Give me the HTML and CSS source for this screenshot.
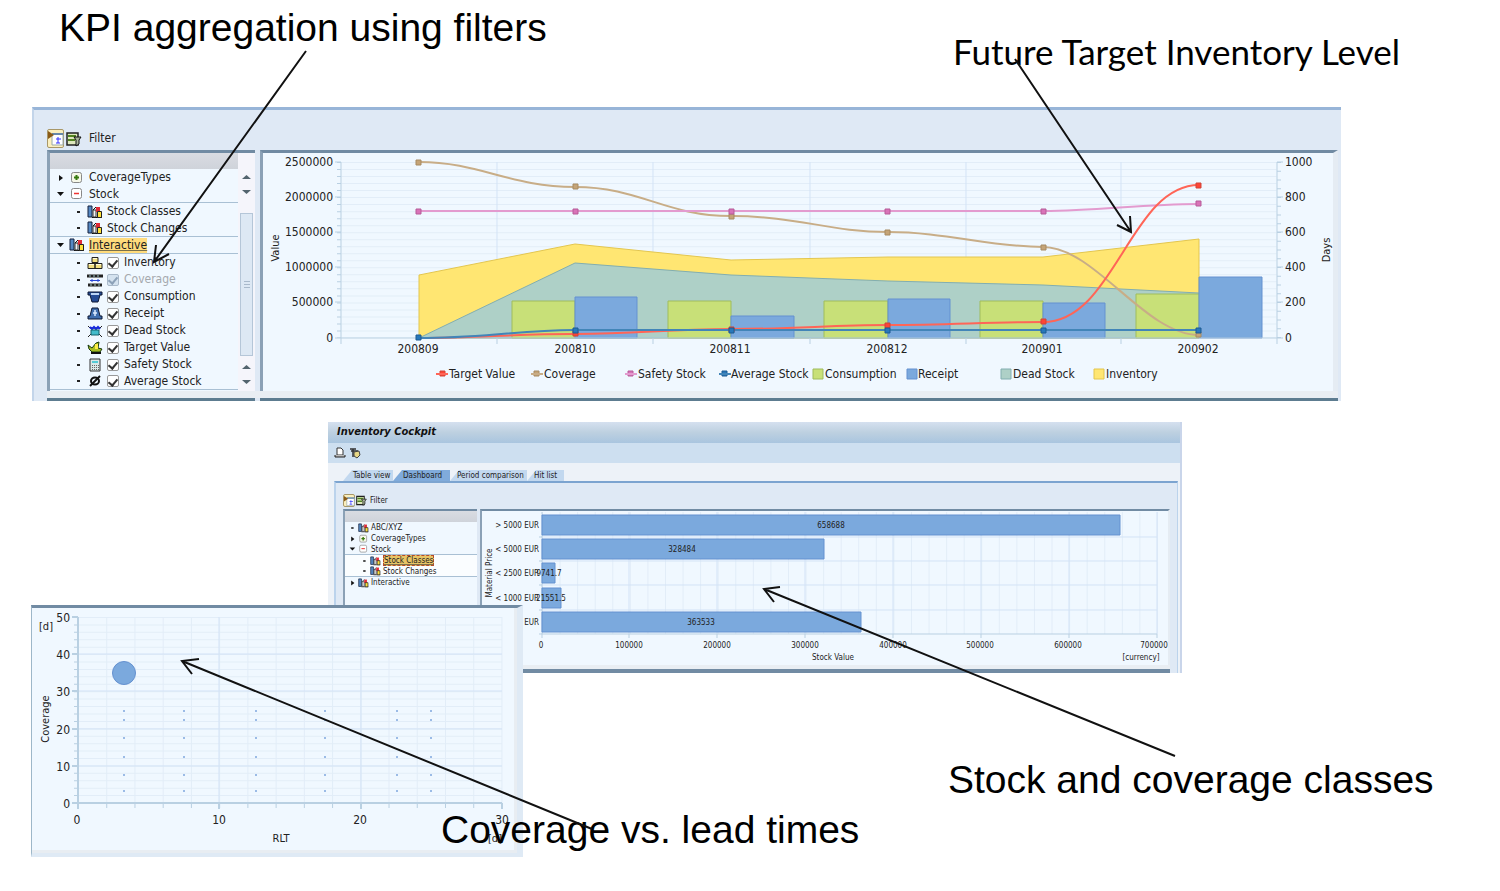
FILE: index.html
```html
<!DOCTYPE html>
<html lang="en">
<head>
<meta charset="utf-8">
<title>Inventory Cockpit</title>
<link rel="stylesheet" href="styles.css">
</head>
<body>
<svg class="defs" aria-hidden="true">
  <symbol id="i-chart" viewBox="0 0 16 14"><path d="M1 1h4v11H1z" fill="#5689c4" stroke="#14213c"/><path d="M5 12.500h10" fill="none" stroke="#111"/><path d="M6 5h3v7H6z" fill="#f4f4f4" stroke="#333"/><path d="M9 2h4v5H9z" fill="#e02c38"/><path d="M10.500 6.500h4v6h-4z" fill="#ffe138" stroke="#222"/><path d="M6 5l3-3" stroke="#111"/></symbol>
  <symbol id="i-plus" viewBox="0 0 16 14"><rect x="2.500" y="1.500" width="10" height="10" rx="2" fill="#f6f8e8" stroke="#888"/><path d="M7.500 4v5M5 6.500h5" stroke="#387b10" stroke-width="2"/></symbol>
  <symbol id="i-minus" viewBox="0 0 16 14"><rect x="2.500" y="1.500" width="10" height="10" rx="2" fill="#fff" stroke="#888"/><path d="M5 6.500h5" stroke="#e33" stroke-width="1.500"/></symbol>
  <symbol id="i-boxes" viewBox="0 0 16 14"><path d="M5 1.500h6v5H5zM1 7.500h7v5H1zM8 7.500h7v5H8z" fill="#f1df80" stroke="#222"/><path d="M6 2.500h4M2 8.500h5M9 8.500h5" stroke="#fffbe0"/></symbol>
  <symbol id="i-cover" viewBox="0 0 16 14"><path d="M0 3h16M1 12h14" stroke="#222" stroke-width="3"/><path d="M2 3h2m2 0h2m2 0h2M3 12h2m2 0h2m2 0h2" stroke="#9cc5c7"/><path d="M5 6v3m6-3v3M3 7.500h10" stroke="#2746d8"/></symbol>
  <symbol id="i-cons" viewBox="0 0 16 14"><path d="M1 2h14v3h-2l-2 7H5L3 5H1z" fill="#254b94" stroke="#0c1733"/><path d="M4 3h8v2H4z" fill="#bcd5f5"/></symbol>
  <symbol id="i-rec" viewBox="0 0 16 14"><path d="M5 1h6l2 8h2v3H1V9h2z" fill="#3f6eae" stroke="#0c1733"/><path d="M6 6h4M8 3v6" stroke="#dcebff" stroke-width="1.500"/></symbol>
  <symbol id="i-dead" viewBox="0 0 16 14"><path d="M1 2l2 2h10l2-2M1 13l3-3h8l3 3" fill="none" stroke="#222"/><path d="M3 3l2 2 2-2 2 2 2-2 2 2" fill="none" stroke="#1628df" stroke-width="2"/><path d="M4 6h8v5H4z" fill="#42bccb" stroke="#15606a"/></symbol>
  <symbol id="i-target" viewBox="0 0 16 14"><path d="M1 4l4 3 4-5 3-1-1 6 4 1-2 3H5l-3-3z" fill="#a7bd22" stroke="#173b10"/><path d="M8 3h3v5H8z" fill="#ffed45"/><path d="M4 12h10" stroke="#111" stroke-width="2"/></symbol>
  <symbol id="i-calc" viewBox="0 0 16 14"><path d="M3 1h10v12H3z" fill="#d9e8e7" stroke="#333"/><path d="M5 3h6v2H5z" fill="#54cbd5"/><path d="M5 7.500h7M5 9.500h7M5 11.500h7" stroke="#666" stroke-dasharray="1 1"/></symbol>
  <symbol id="i-avg" viewBox="0 0 16 14"><ellipse cx="8" cy="7" rx="4" ry="3.500" fill="none" stroke="#111" stroke-width="2"/><path d="M3 12L13 2" stroke="#111" stroke-width="2"/></symbol>
  <symbol id="i-tree" viewBox="0 0 16 16"><path d="M4 3h11v11H4z" fill="#fff" stroke="#9aa"/><path d="M4 3h11" stroke="#68a" stroke-width="2"/><path d="M0 0l6 4-6 4z" fill="#8a5a16"/><path d="M10 6v6M8 8h5M8 12h4" stroke="#33f"/></symbol>
  <symbol id="i-filter" viewBox="0 0 16 16"><path d="M1 2h11v12H1z" fill="#dfe9bd" stroke="#222" stroke-width="1.500"/><path d="M2 5h8M2 9h7" stroke="#528421" stroke-width="2"/><path d="M8 6h7l-2 3v4l-3 2V9z" fill="#aab59c" stroke="#111"/></symbol>
  <symbol id="i-page" viewBox="0 0 12 12"><path d="M3 1h4l2 2v5H3z" fill="#fff" stroke="#333"/><path d="M1 8v2h10V8" fill="#bbb" stroke="#222"/></symbol>
  <symbol id="i-pick" viewBox="0 0 12 12"><path d="M1 2h6M2 4h7M4 2v8" stroke="#333" stroke-width="1.500"/><path d="M5 5l5-1 1 4-3 3-3-2z" fill="#e9d886" stroke="#444"/></symbol>
  <symbol id="i-right" viewBox="0 0 10 10"><path d="M4 2l4 3-4 3z" fill="#111"/></symbol>
  <symbol id="i-down" viewBox="0 0 10 10"><path d="M2 3h7L5.500 7z" fill="#111"/></symbol>
  <symbol id="i-dot" viewBox="0 0 10 10"><path d="M4 4h3v2H4z" fill="#222"/></symbol>
</svg>

<main class="canvas">
  <section class="window overview">
    <div class="tools"><button class="tool on" aria-label="Tree"><svg><use href="#i-tree"/></svg></button><button class="tool" aria-label="Filter settings"><svg><use href="#i-filter"/></svg></button><span>Filter</span></div>
    <div class="panels">
      <div class="panel tree">
        <div class="rows">
          <div class="head"></div>
          <div class="row"><svg class="ex"><use href="#i-right"/></svg><svg class="ic"><use href="#i-plus"/></svg><span>CoverageTypes</span></div>
          <div class="row under"><svg class="ex"><use href="#i-down"/></svg><svg class="ic"><use href="#i-minus"/></svg><span>Stock</span></div>
          <div class="row sub"><svg class="ex"><use href="#i-dot"/></svg><svg class="ic"><use href="#i-chart"/></svg><span>Stock Classes</span></div>
          <div class="row sub under"><svg class="ex"><use href="#i-dot"/></svg><svg class="ic"><use href="#i-chart"/></svg><span>Stock Changes</span></div>
          <div class="row under"><svg class="ex"><use href="#i-down"/></svg><svg class="ic"><use href="#i-chart"/></svg><span class="picked">Interactive</span></div>
          <div class="row sub"><svg class="ex"><use href="#i-dot"/></svg><svg class="ic"><use href="#i-boxes"/></svg><input type="checkbox" id="c1" checked><label for="c1">Inventory</label></div>
          <div class="row sub"><svg class="ex"><use href="#i-dot"/></svg><svg class="ic"><use href="#i-cover"/></svg><input type="checkbox" id="c2" checked disabled><label for="c2">Coverage</label></div>
          <div class="row sub"><svg class="ex"><use href="#i-dot"/></svg><svg class="ic"><use href="#i-cons"/></svg><input type="checkbox" id="c3" checked><label for="c3">Consumption</label></div>
          <div class="row sub"><svg class="ex"><use href="#i-dot"/></svg><svg class="ic"><use href="#i-rec"/></svg><input type="checkbox" id="c4" checked><label for="c4">Receipt</label></div>
          <div class="row sub"><svg class="ex"><use href="#i-dot"/></svg><svg class="ic"><use href="#i-dead"/></svg><input type="checkbox" id="c5" checked><label for="c5">Dead Stock</label></div>
          <div class="row sub"><svg class="ex"><use href="#i-dot"/></svg><svg class="ic"><use href="#i-target"/></svg><input type="checkbox" id="c6" checked><label for="c6">Target Value</label></div>
          <div class="row sub"><svg class="ex"><use href="#i-dot"/></svg><svg class="ic"><use href="#i-calc"/></svg><input type="checkbox" id="c7" checked><label for="c7">Safety Stock</label></div>
          <div class="row sub under"><svg class="ex"><use href="#i-dot"/></svg><svg class="ic"><use href="#i-avg"/></svg><input type="checkbox" id="c8" checked><label for="c8">Average Stock</label></div>
        </div>
        <div class="scroll"><i class="up"></i><i class="dn"></i><b></b><i class="up"></i><i class="dn"></i></div>
      </div>
      <div class="panel chart">
        <svg class="plot" viewBox="263 153 1070 238" role="img" aria-label="Inventory by period">
          <path class="grid" d="M809 162v176" stroke-width="935" stroke-dasharray="1 6.020"/>
          <path class="gridv" d="M497 162v176M653 162v176M810 162v176M966 162v176M1121 162v176"/>
          <path class="inv" d="M419 338V275L575 244L731 260L888 257H1043L1199 239V338z"/>
          <path class="dead" d="M419 338L575 263L731 275L888 281L1043 285L1199 293V338z"/>
          <path class="cons" d="M512 338V301h63v37zM668 338V301h63v37zM824 338V301h64v37zM980 338V301h63v37zM1136 338V294h63v44z"/>
          <path class="rec" d="M575 338V297h62v41zM731 338V316h63v22zM888 338V299h62v39zM1043 338V303h62v35zM1199 338V277h63v61z"/>
          <path class="axis" d="M341 162v182M1277 162v182M341 338h936M497 338v6M653 338v6M810 338v6M966 338v6M1121 338v6M335 162h6M335 197h6M335 232h6M335 267h6M335 302h6M335 338h6M1277 162h6M1277 197h6M1277 232h6M1277 267h6M1277 302h6M1277 338h6"/>
          <path class="tick" d="M339 162v176" stroke-width="4" stroke-dasharray="1 6.020"/><path class="tick" d="M1279 162v176" stroke-width="4" stroke-dasharray="1 7.750"/>
          <path class="line cov" d="M419 162C480 162 510 187 575 187S665 216 731 216S830 232 888 232S990 247 1043 247C1095 247 1145 335 1199 335"/>
          <path class="line saf" d="M419 211H1043C1100 211 1140 204 1199 204"/>
          <path class="line tar" d="M419 338C480 338 510 334 575 334S665 329 731 329S830 325 888 325S990 322 1043 322C1115 322 1130 185 1199 185"/>
          <path class="line avg" d="M419 338C480 338 510 331 575 330H1199"/>
          <path class="mcov" d="M416 160h5v5h-5zM573 184h5v5h-5zM729 214h5v5h-5zM885 230h5v5h-5zM1041 245h5v5h-5zM1196 332h5v5h-5zM534 371h5v5h-5z"/>
          <path class="msaf" d="M416 209h5v5h-5zM573 209h5v5h-5zM729 209h5v5h-5zM885 209h5v5h-5zM1041 209h5v5h-5zM1196 201h5v5h-5zM628 371h5v5h-5z"/>
          <path class="mtar" d="M573 331h5v5h-5zM729 327h5v5h-5zM885 323h5v5h-5zM1041 319h5v5h-5zM1196 183h5v5h-5zM440 371h5v5h-5z"/>
          <path class="mavg" d="M416 335h5v5h-5zM573 328h5v5h-5zM729 328h5v5h-5zM885 328h5v5h-5zM1041 328h5v5h-5zM1196 328h5v5h-5zM722 371h5v5h-5z"/>
          <path class="tar line" d="M436 374h12"/><path class="cov line" d="M531 374h12"/><path class="saf line" d="M625 374h12"/><path class="avg line" d="M719 374h12"/>
          <path class="cons" d="M813 369h10v10h-10z"/><path class="rec" d="M907 369h10v10h-10z"/><path class="dead" d="M1001 369h10v10h-10z"/><path class="inv" d="M1094 369h10v10h-10z"/>
          <g class="end"><text x="333" y="166">2500000</text><text x="333" y="201">2000000</text><text x="333" y="236">1500000</text><text x="333" y="271">1000000</text><text x="333" y="306">500000</text><text x="333" y="342">0</text></g>
          <g><text x="1285" y="166">1000</text><text x="1285" y="201">800</text><text x="1285" y="236">600</text><text x="1285" y="271">400</text><text x="1285" y="306">200</text><text x="1285" y="342">0</text></g>
          <g class="mid"><text x="418" y="353">200809</text><text x="575" y="353">200810</text><text x="730" y="353">200811</text><text x="887" y="353">200812</text><text x="1042" y="353">200901</text><text x="1198" y="353">200902</text><text class="small" transform="translate(279 248) rotate(-90)">Value</text><text class="small" transform="translate(1330 250) rotate(-90)">Days</text></g>
          <g><text x="449" y="378">Target Value</text><text x="544" y="378">Coverage</text><text x="638" y="378">Safety Stock</text><text x="731" y="378">Average Stock</text><text x="825" y="378">Consumption</text><text x="918" y="378">Receipt</text><text x="1013" y="378">Dead Stock</text><text x="1106" y="378">Inventory</text></g>
        </svg>
      </div>
    </div>
    <div class="foot"><i></i><i></i></div>
  </section>

  <section class="window cockpit">
    <h1>Inventory Cockpit</h1>
    <div class="bar"><button aria-label="Print"><svg><use href="#i-page"/></svg></button><button aria-label="Select"><svg><use href="#i-pick"/></svg></button></div>
    <nav class="tabs"><button class="t1">Table view</button><button class="t2 active">Dashboard</button><button class="t3">Period comparison</button><button class="t4">Hit list</button></nav>
    <div class="body">
      <div class="tools"><button class="tool on" aria-label="Tree"><svg><use href="#i-tree"/></svg></button><button class="tool" aria-label="Filter settings"><svg><use href="#i-filter"/></svg></button><span>Filter</span></div>
      <div class="panels">
        <div class="panel tree"><div class="rows">
          <div class="head"></div>
          <div class="row"><svg class="ex"><use href="#i-dot"/></svg><svg class="ic"><use href="#i-chart"/></svg><span>ABC/XYZ</span></div>
          <div class="row"><svg class="ex"><use href="#i-right"/></svg><svg class="ic"><use href="#i-plus"/></svg><span>CoverageTypes</span></div>
          <div class="row under"><svg class="ex"><use href="#i-down"/></svg><svg class="ic"><use href="#i-minus"/></svg><span>Stock</span></div>
          <div class="row sub"><svg class="ex"><use href="#i-dot"/></svg><svg class="ic"><use href="#i-chart"/></svg><span class="picked focus">Stock Classes</span></div>
          <div class="row sub under"><svg class="ex"><use href="#i-dot"/></svg><svg class="ic"><use href="#i-chart"/></svg><span>Stock Changes</span></div>
          <div class="row"><svg class="ex"><use href="#i-right"/></svg><svg class="ic"><use href="#i-chart"/></svg><span>Interactive</span></div>
        </div></div>
        <div class="panel chart">
          <svg class="plot tiny" viewBox="482 511 686 154" role="img" aria-label="Stock value by material price">
            <path class="grid" d="M542 573h616" stroke-width="122" stroke-dasharray="1 16.570"/>
            <path class="gridv" d="M629 512v122M717 512v122M805 512v122M893 512v122M981 512v122M1069 512v122M1157 512v122M542 537h615M542 561h615M542 585h615M542 610h615"/>
            <path class="axis" d="M542 512v126M539 537h3M539 561h3M539 585h3M539 610h3M539 634h618M629 634v4M717 634v4M805 634v4M893 634v4M981 634v4M1069 634v4M1157 634v4"/>
            <path class="rec" d="M542 515h578v20H542zM542 539h282v20H542zM542 563h13v20h-13zM542 588h19v20h-19zM542 612h319v20H542z"/>
            <g class="end"><text x="539" y="528">&gt; 5000 EUR</text><text x="539" y="552">&lt; 5000 EUR</text><text x="539" y="576">&lt; 2500 EUR</text><text x="539" y="601">&lt; 1000 EUR</text><text x="539" y="625">EUR</text></g>
            <g class="mid"><text x="831" y="528">658688</text><text x="682" y="552">328484</text><text x="549" y="576">9741.7</text><text x="551" y="601">21551.5</text><text x="701" y="625">363533</text>
            <text x="541" y="648">0</text><text x="629" y="648">100000</text><text x="717" y="648">200000</text><text x="805" y="648">300000</text><text x="893" y="648">400000</text><text x="980" y="648">500000</text><text x="1068" y="648">600000</text><text x="1154" y="648">700000</text><text x="833" y="660">Stock Value</text><text x="1141" y="660">[currency]</text><text transform="translate(492 573) rotate(-90)">Material Price</text></g>
          </svg>
        </div>
      </div>
      <div class="foot"><i></i></div>
    </div>
  </section>

  <section class="window bubble">
    <svg class="plot" viewBox="32 608 482 242" role="img" aria-label="Coverage against lead time">
      <path class="grid" d="M290 617v187" stroke-width="424" stroke-dasharray="1 6.420"/>
      <path class="grid" d="M78 710h425" stroke-width="186" stroke-dasharray="1 27.230"/>
      <path class="gridv" d="M219 617v186M361 617v186M78 654h424M78 691h424M78 729h424M78 766h424"/>
      <path class="axis wide" d="M78 617v192M72 803h430M72 617h6M72 654h6M72 691h6M72 729h6M72 766h6M219 803v6M361 803v6M502 803v6"/>
      <path class="tick" d="M76 617v186" stroke-width="4" stroke-dasharray="1 6.420"/><path class="tick" d="M78 806h424" stroke-width="4" stroke-dasharray="1 27.230"/>
      <circle class="rec" cx="124" cy="673" r="11.500"/>
      <g class="dots"><path d="M123 711h309"/><path d="M123 720h309"/><path d="M123 738h309"/><path d="M123 757h309"/><path d="M123 775h309"/><path d="M123 791h309"/></g>
      <g class="end"><text x="70" y="622">50</text><text x="70" y="659">40</text><text x="70" y="696">30</text><text x="70" y="734">20</text><text x="70" y="771">10</text><text x="70" y="808">0</text></g>
      <g class="mid"><text x="77" y="824">0</text><text x="219" y="824">10</text><text x="360" y="824">20</text><text x="502" y="824">30</text><text class="small" x="281" y="842">RLT</text><text class="small" x="46" y="630">[d]</text><text class="small" x="495" y="842">[d]</text><text class="small" transform="translate(49 719) rotate(-90)">Coverage</text></g>
    </svg>
  </section>

  <p class="note n1">KPI aggregation using filters</p>
  <p class="note n2">Future Target Inventory Level</p>
  <p class="note n3">Stock and coverage classes</p>
  <p class="note n4">Coverage vs. lead times</p>
  <svg class="arrows" viewBox="0 0 1500 891" aria-hidden="true">
    <path d="M306 51L154 262M156 245L154 262L169 254"/>
    <path d="M1015 59L1131 232M1117 225L1131 232L1130 216"/>
    <path d="M1175 756L764 589M780 587L764 589L774 602"/>
    <path d="M592 829L182 661M199 659L182 661L192 674"/>
  </svg>
</main>
</body>
</html>
```
FILE: styles.css
```css
* { box-sizing: border-box; }
body { margin: 0; background: #fff; color: #222; font: 12px/17px "DejaVu Sans Condensed", "Noto Sans", sans-serif; }
button { border: 0; padding: 0; background: none; color: inherit; font: inherit; }
svg { display: block; }
.defs { position: absolute; width: 0; height: 0; }
.canvas { position: relative; width: 100%; min-height: 891px; overflow: hidden; }
.window { position: absolute; }

.overview { top: 107px; left: 32px; right: 159px; border-top: 3px solid #98b5d8; border-left: 2px solid #c3d5ea; background: #dfe9f5; padding: 17px 3px 0 13px; }
.tools { display: flex; align-items: center; height: 23px; gap: 2px; }
.tools span { margin-left: 4px; }
.tool { width: 17px; height: 19px; padding: 1px 0; }
.tool svg { width: 16px; height: 16px; }
.tool.on { background: #fbefbd; border: 1px solid #a89768; border-radius: 2px; }
.panels { display: grid; grid-template-columns: 208px 1fr; gap: 5px; }
.panel { border-top: 3px solid #718ba3; border-left: 3px solid #8ba1b6; background: #f0f8ff; }
.chart { border-right: 5px solid #e5ecf3; }
.tree { display: flex; }
.rows { flex: 1; min-width: 0; }
.head { height: 16px; background: linear-gradient(#d9dce2, #cfd3da); }
.row { display: flex; align-items: center; gap: 4px; height: 17px; padding-left: 5px; white-space: nowrap; }
.row.sub { padding-left: 23px; }
.under { border-bottom: 1px solid #a9c0d4; }
.ex { width: 10px; height: 10px; flex: none; }
.ic { width: 16px; height: 14px; flex: none; }
.picked { background: #ffdb7c; height: 15px; line-height: 15px; text-decoration: underline; text-decoration-color: #7b714c; }
.row input { appearance: none; flex: none; width: 12px; height: 12px; margin: 0 1px 0 0; border: 1px solid #999; border-radius: 2px; background: #fff; display: grid; place-items: center; }
.row input::before { content: ""; width: 4px; height: 7px; border: solid #333; border-width: 0 2px 2px 0; transform: rotate(40deg); }
.row input:disabled { background: #d4e2ef; border-color: #a9b9ca; }
.row input:disabled::before { border-color: #8ca1b8; }
.row input:disabled + label { color: #a5a9ae; }
.scroll { width: 17px; padding: 16px 1px 0; display: flex; flex-direction: column; align-items: center; background: #f5f5fb; }
.scroll i { width: 9px; height: 4px; margin: 6px 0; background: #53646e; clip-path: polygon(50% 0, 100% 100%, 0 100%); }
.scroll .dn { clip-path: polygon(0 0, 100% 0, 50% 100%); }
.scroll b { width: 13px; height: 143px; margin: 13px 0 3px; border: 1px solid #b5c6d8; background: repeating-linear-gradient(#a9b9cb 0 1px, transparent 1px 3px) center / 6px 8px no-repeat, #dde8f4; }
.scroll .up + .dn { margin-top: 5px; }
.foot { height: 10px; display: grid; grid-template-columns: 208px 1fr; gap: 5px; border-top: 7px solid #e9eef3; }
.foot i { background: #5d7c90; }

.plot { width: 100%; height: auto; font-size: 12px; fill: #222; }
.plot .small { font-size: 11px; }
.plot.tiny { font-size: 8px; }
.end { text-anchor: end; }
.mid { text-anchor: middle; }
.plot path { fill: none; }
.grid { stroke: #e2edf8; }
.gridv { stroke: #d3e3f6; }
.axis { stroke: #b9d0e2; }
.wide { stroke-width: 2; }
.tick { stroke: #b9d0e2; }
.plot .inv { fill: #ffe672; stroke: #e3c64f; }
.plot .dead { fill: #aed0c7; stroke: #82aeb0; }
.plot .cons { fill: #c8e078; stroke: #9fbc5c; }
.plot .rec { fill: #7ba9dd; stroke: #6591d0; }
.line { stroke-width: 2; }
.cov { stroke: #c8ad87; }
.saf { stroke: #e39bcf; }
.tar { stroke: #ff6557; }
.avg { stroke: #4285b8; }
.plot .mcov { fill: #c5a477; stroke: #a68a63; }
.plot .msaf { fill: #d973b8; stroke: #b65d99; }
.plot .mtar { fill: #ff4435; stroke: #cf4439; }
.plot .mavg { fill: #2878ba; stroke: #1d5a91; }
.dots { stroke: #9bbbe6; stroke-width: 2; stroke-dasharray: 2 58 2 70 2 67 2 70 2 32 2 400; }

.cockpit { top: 422px; left: 328px; right: 318px; background: #edf2f8; font-size: 8px; line-height: 11px; border-right: 2px solid #c9d5ea; }
.cockpit h1 { margin: 0; height: 21px; padding-left: 9px; font: italic bold 11px/19px "DejaVu Sans Condensed", "Noto Sans", sans-serif; color: #111; background: linear-gradient(#d5e0ef, #bdd0e0 50%, #a9c5df); }
.bar { height: 20px; padding-left: 6px; display: flex; align-items: center; gap: 3px; background: #cddff0; }
.bar svg { width: 12px; height: 12px; }
.tabs { display: flex; height: 18px; padding: 7px 0 0 15px; }
.tabs button { height: 11px; padding-left: 10px; text-align: left; white-space: nowrap; background: #c2d8ef; clip-path: polygon(9px 0, 100% 0, 100% 100%, 0 100%); }
.tabs .t1 { width: 50px; }
.tabs .t2 { width: 57px; }
.tabs .t3 { width: 77px; padding-left: 7px; }
.tabs .t4 { width: 37px; padding-left: 7px; }
.tabs .active { background: #80abdb; }
.cockpit .body { margin: 0 2px 0 6px; padding: 9px 7px 0; border-top: 2px solid #7ca4d0; border-left: 2px solid #bbd3ec; border-right: 1px solid #bbd3ec; background: #dfe9f5; }
.cockpit .tools { height: 17px; gap: 1px; }
.cockpit .tools span { margin-left: 1px; }
.cockpit .tool { width: 12px; height: 13px; }
.cockpit .tool svg { width: 11px; height: 11px; }
.cockpit .panels { grid-template-columns: 134px 1fr; gap: 3px; }
.cockpit .panel { border-top-width: 2px; border-left-width: 2px; }
.cockpit .chart { border-right-width: 2px; }
.cockpit .head { height: 11px; }
.cockpit .row { height: 11px; gap: 2px; padding-left: 3px; }
.cockpit .row.sub { padding-left: 15px; background: #fafdff; }
.cockpit .ex { width: 8px; height: 8px; }
.cockpit .ic { width: 11px; height: 10px; }
.cockpit .picked { height: 11px; line-height: 10px; background: #e8c465; border: 1px dashed #b64b2b; }
.cockpit .foot { height: 8px; grid-template-columns: 1fr; border-top-width: 4px; }
.cockpit .foot i { background: #718ba3; }

.bubble { top: 605px; left: 31px; right: 977px; padding-right: 3px; background: #e8edf2; border-top: 3px solid #718ba3; border-left: 1px solid #9db7c9; border-bottom: 4px solid #dfeaf5; border-right: 6px solid #dfeaf5; }
.bubble .plot { background: #f0f8ff; margin-bottom: 3px; }

.note { position: absolute; margin: 0; color: #000; font: 39px/46px "Liberation Sans", sans-serif; white-space: nowrap; }
.n1 { top: 5px; left: 59px; }
.n2 { top: 28px; left: 953px; font: 35px/46px Lato, sans-serif; }
.n3 { top: 757px; left: 948px; }
.n4 { top: 807px; left: 441px; }
.arrows { position: absolute; inset: 0; width: 100%; height: auto; fill: none; stroke: #111; stroke-width: 2; pointer-events: none; }
```
